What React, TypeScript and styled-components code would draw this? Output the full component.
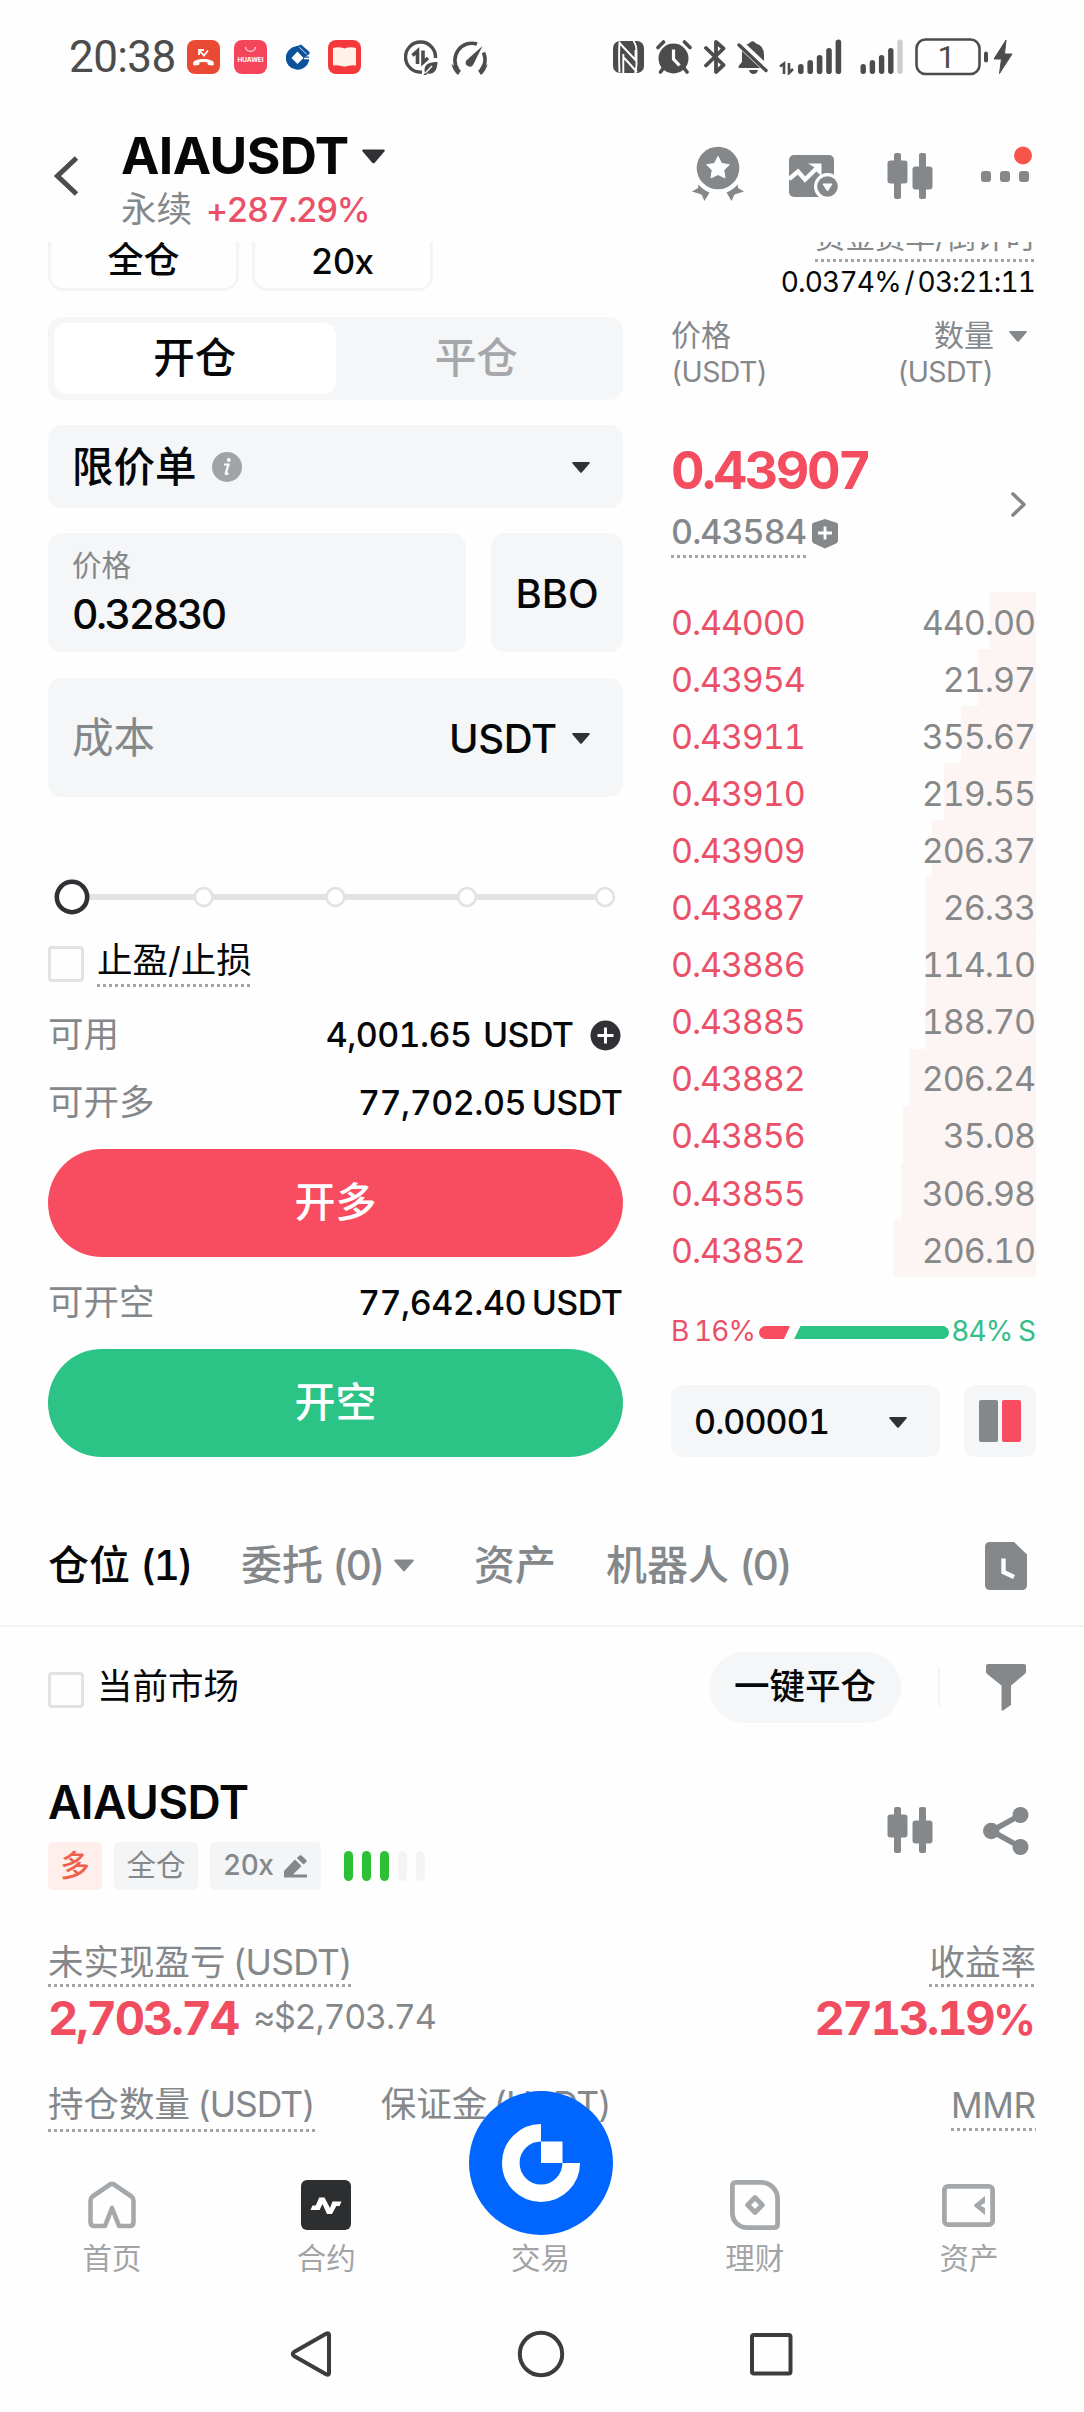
import React from "react";
import styled, { createGlobalStyle } from "styled-components";

const GRAY = "#85888b";
const RED = "#f84d60";
const GREEN = "#2cc387";
const INK = "#060708";
const PANEL = "#f4f6f7";

const Global = createGlobalStyle`
  * { box-sizing: border-box; }
  body { margin: 0; background: #fefefe; }
  svg { display: block; flex: none; }
`;

const Page = styled.div`
  width: 1084px;
  height: 2412px;
  overflow: hidden;
  display: flex;
  flex-direction: column;
  background: #fefefe;
  color: ${INK};
  font-family: Inter, "Noto Sans CJK SC", sans-serif;
  font-feature-settings: "tnum";
  white-space: nowrap;
`;

const Text = styled.span<{ $s: number; $w?: number; $c?: string; $ls?: number; $ws?: number }>`
  display: block;
  font-size: ${(p) => p.$s}px;
  font-weight: ${(p) => p.$w ?? 400};
  color: ${(p) => p.$c ?? INK};
  letter-spacing: ${(p) => p.$ls ?? 0}px;
  word-spacing: ${(p) => p.$ws ?? 0}px;
  margin-right: ${(p) => -(p.$ls ?? 0)}px;
  line-height: 1.2;
`;

/* Latin suffix set tighter than the Chinese label in front of it */
const Suffix = styled.span<{ $ls: number; $ml: number }>`
  letter-spacing: ${(p) => p.$ls}px;
  margin-left: ${(p) => p.$ml}px;
`;

const Dotted = styled.div<{ $gap?: number }>`
  width: max-content;
  padding-bottom: ${(p) => p.$gap ?? 6}px;
  background: repeating-linear-gradient(90deg, #a3a5a7 0 3px, transparent 3px 6px) left bottom / 100% 3px no-repeat;
`;

/* ---------- status bar ---------- */
const StatusBar = styled.div`
  height: 112px;
  padding: 37px 71px 0 69px;
  display: flex;
  justify-content: space-between;
`;
const StatusSide = styled.div`
  display: flex;
  align-items: center;
  height: 40px;
`;
const Slot = styled.div<{ $ml?: number; $pt?: number }>`
  margin-left: ${(p) => p.$ml ?? 0}px;
  padding-top: ${(p) => p.$pt ?? 0}px;
`;
const Clock = styled.div`
  width: 107px;
  font: 400 44px/41px Roboto, sans-serif;
  letter-spacing: -0.6px;
  color: #4c4c4c;
`;

/* ---------- header ---------- */
const Header = styled.div`
  height: 130px;
  padding: 18px 52px 0 54px;
  display: flex;
`;
const BackSlot = styled.div`
  width: 67px;
  padding-top: 26px;
`;
const TitleBlock = styled.div`
  flex: 1;
`;
const TitleLine = styled.div`
  display: flex;
  align-items: center;
  height: 52px;
  gap: 13px;
`;
const SubLine = styled.div`
  display: flex;
  align-items: center;
  height: 44px;
  gap: 14px;
  margin-top: 6px;
`;
const HeaderIcons = styled.div`
  display: flex;
  align-items: flex-start;
  padding-top: 16px;
`;

/* ---------- trading area ---------- */
const Trade = styled.div`
  height: 1258px;
  overflow: hidden;
  padding: 0 48px;
  display: flex;
  gap: 48px;
`;
const Form = styled.div`
  width: 575px;
  display: flex;
  flex-direction: column;
`;
const ModeRow = styled.div`
  display: flex;
  gap: 13px;
  margin-top: -16px;
`;
const ModeBox = styled.div<{ $w: number }>`
  width: ${(p) => p.$w}px;
  height: 65px;
  padding-top: 4px;
  border: 3px solid #f4f4f5;
  border-radius: 15px;
  display: flex;
  align-items: center;
  justify-content: center;
`;
const Segment = styled.div`
  margin-top: 26px;
  height: 83px;
  padding: 6px;
  display: flex;
  border-radius: 14px;
  background: ${PANEL};
`;
const SegmentItem = styled.div<{ $on?: boolean }>`
  flex: 1;
  display: flex;
  align-items: center;
  justify-content: center;
  border-radius: 12px;
  background: ${(p) => (p.$on ? "#fff" : "transparent")};
`;
const Field = styled.div<{ $h: number; $mt?: number; $w?: number }>`
  height: ${(p) => p.$h}px;
  ${(p) => (p.$w ? `width: ${p.$w}px;` : "")}
  margin-top: ${(p) => p.$mt ?? 25}px;
  padding: 2px 33px 0 24px;
  display: flex;
  align-items: center;
  justify-content: space-between;
  border-radius: 14px;
  background: ${PANEL};
`;
const FieldRow = styled.div`
  display: flex;
  justify-content: space-between;
`;
const Inline = styled.div<{ $gap: number }>`
  display: flex;
  align-items: center;
  gap: ${(p) => p.$gap}px;
`;
const PriceStack = styled.div`
  display: flex;
  flex-direction: column;
  gap: 6px;
`;
const BboButton = styled.div`
  width: 132px;
  height: 119px;
  margin-top: 25px;
  padding-top: 2px;
  border-radius: 14px;
  background: ${PANEL};
  display: flex;
  align-items: center;
  justify-content: center;
`;
const CheckRow = styled.div`
  height: 50px;
  margin-top: 22px;
  display: flex;
  align-items: flex-start;
  gap: 13px;
`;
const CheckBox = styled.div`
  width: 36px;
  height: 36px;
  border: 3px solid #e2e2e2;
  border-radius: 4px;
`;
const InfoRow = styled.div<{ $mt: number }>`
  height: 44px;
  margin-top: ${(p) => p.$mt}px;
  padding-top: 1px;
  display: flex;
  align-items: center;
  justify-content: space-between;
`;
const Balance = styled.div`
  display: flex;
  align-items: center;
  gap: 16px;
  margin-right: 2px;
`;
const ActionButton = styled.div<{ $bg: string }>`
  height: 108px;
  margin-top: 24px;
  border-radius: 54px;
  background: ${(p) => p.$bg};
  display: flex;
  align-items: center;
  justify-content: center;
`;

/* ---------- order book ---------- */
const Book = styled.div`
  width: 365px;
  flex: none;
  display: flex;
  flex-direction: column;
`;
const Funding = styled.div`
  height: 46px;
  margin-top: -23px;
  display: flex;
  flex-direction: column;
  align-items: flex-end;
`;
const FundingRate = styled.div`
  height: 34px;
  margin-top: 1px;
  display: flex;
  align-items: center;
  justify-content: flex-end;
`;
const BookHead = styled.div`
  margin-top: 17px;
  height: 74px;
  display: flex;
  justify-content: space-between;
`;
const HeadCell = styled.div<{ $end?: boolean }>`
  height: 72px;
  display: flex;
  flex-direction: column;
  align-items: ${(p) => (p.$end ? "flex-end" : "flex-start")};
  justify-content: space-between;
`;
const SortHead = styled.div`
  display: flex;
  gap: 15px;
  padding-right: 9px;
`;
const PriceHead = styled.div`
  margin-top: 49px;
  height: 152px;
  display: flex;
  justify-content: space-between;
`;
const PriceCell = styled.div`
  display: flex;
  flex-direction: column;
  gap: 10px;
`;
const MarkRow = styled.div`
  display: flex;
  gap: 5px;
`;
const OrderRow = styled.div<{ $depth: number }>`
  height: 57.1px;
  flex: none;
  padding-top: 5px;
  display: flex;
  align-items: center;
  justify-content: space-between;
  background: linear-gradient(#fdf5f4, #fdf5f4) right / ${(p) => p.$depth}px 100% no-repeat;
`;
const RatioRow = styled.div`
  height: 40px;
  margin-top: 35px;
  display: flex;
  align-items: center;
  justify-content: space-between;
`;
const BookTools = styled.div`
  margin-top: 33px;
  display: flex;
  justify-content: space-between;
`;
const StepSelect = styled.div`
  width: 269px;
  height: 72px;
  padding: 3px 33px 0 23px;
  border-radius: 12px;
  background: ${PANEL};
  display: flex;
  align-items: center;
  justify-content: space-between;
`;
const BookSplit = styled.div`
  width: 72px;
  height: 72px;
  border-radius: 12px;
  background: ${PANEL};
  display: flex;
  align-items: center;
  justify-content: center;
  gap: 4px;
`;
const SplitBar = styled.div<{ $bg: string }>`
  width: 19px;
  height: 42px;
  border-radius: 2px;
  background: ${(p) => p.$bg};
`;

/* ---------- positions ---------- */
const Tabs = styled.div`
  height: 127px;
  padding: 6px 57px 0 48px;
  display: flex;
  align-items: center;
  border-bottom: 2px solid #f2f3f3;
`;
const Tab = styled.div<{ $w: number }>`
  width: ${(p) => p.$w}px;
  display: flex;
  align-items: center;
  gap: 11px;
`;
const FilterRow = styled.div`
  height: 120px;
  padding: 0 58px 0 48px;
  display: flex;
  align-items: center;
`;
const Pill = styled.div`
  width: 192px;
  height: 71px;
  margin-left: auto;
  border-radius: 36px;
  background: ${PANEL};
  display: flex;
  align-items: center;
  justify-content: center;
`;
const Rule = styled.div`
  width: 2px;
  height: 38px;
  margin: 0 46px 0 37px;
  background: #f2f3f4;
`;
const PositionHead = styled.div`
  height: 163px;
  padding: 28px 55px 0 48px;
  display: flex;
  justify-content: space-between;
`;
const TagRow = styled.div`
  display: flex;
  align-items: center;
  margin-top: 12px;
`;
const Tag = styled.div<{ $w: number; $bg?: string }>`
  width: ${(p) => p.$w}px;
  height: 48px;
  margin-right: 12px;
  border-radius: 5px;
  background: ${(p) => p.$bg ?? "#f3f5f6"};
  display: flex;
  align-items: center;
  justify-content: center;
  gap: 10px;
`;
const RiskBars = styled.div`
  display: flex;
  gap: 9px;
  margin-left: 11px;
`;
const RiskBar = styled.div<{ $on: boolean }>`
  width: 9px;
  height: 30px;
  border-radius: 5px;
  background: ${(p) => (p.$on ? "#2dc036" : "#f4f4f5")};
`;
const PositionIcons = styled.div`
  display: flex;
  gap: 50px;
  padding-top: 32px;
`;
const PnlRow = styled.div`
  height: 146px;
  padding: 32px 48px 0 48px;
  display: flex;
  justify-content: space-between;
`;
const PnlCell = styled.div<{ $end?: boolean }>`
  display: flex;
  flex-direction: column;
  align-items: ${(p) => (p.$end ? "flex-end" : "flex-start")};
  gap: 3px;
`;
const Percent = styled.span`
  font-size: 42px;
`;
const SizeRow = styled.div`
  height: 74px;
  padding: 28px 48px 0 48px;
  display: flex;
  align-items: flex-start;
`;
const Margin = styled.div`
  margin-left: 66px;
  flex: 1;
`;

/* ---------- bottom navigation ---------- */
const NavBar = styled.div`
  position: relative;
  height: 165px;
  padding: 0 8px 0 5px;
  display: flex;
`;
const NavItem = styled.div`
  flex: 1;
  display: flex;
  flex-direction: column;
  align-items: center;
`;
const NavIcon = styled.div`
  height: 111px;
  padding-top: 39px;
  display: flex;
  align-items: center;
`;
const TradeButton = styled.div`
  position: absolute;
  left: 469px;
  top: -39px;
  width: 144px;
  height: 144px;
  border-radius: 50%;
  background: #0066ff;
`;
const SystemBar = styled.div`
  flex: 1;
  padding: 35px 291px 0 290px;
  display: flex;
  align-items: flex-start;
  justify-content: space-between;
`;

/* ---------- icons ---------- */
const Caret = ({ w = 18, h = 11, c = "#2f3134" }: { w?: number; h?: number; c?: string }) => (
  <svg width={w} height={h} viewBox="0 0 18 11">
    <path d="M1.2 0h15.6q1.6 0.2 0.7 1.6L10 10.3q-1 1-2 0L0.5 1.6Q-0.4 0.2 1.2 0Z" fill={c} />
  </svg>
);

const Candles = () => (
  <svg width="46" height="46" viewBox="0 0 46 46" fill={GRAY}>
    <rect x="7" y="0" width="7" height="46" rx="2" />
    <rect x="0.500" y="7.500" width="20" height="23" rx="3" />
    <rect x="32" y="0" width="7" height="46" rx="2" />
    <rect x="25.500" y="13.500" width="20" height="23" rx="3" />
  </svg>
);

const MissedCall = () => (
  <svg width="33" height="34" viewBox="0 0 33 34">
    <rect width="33" height="34" rx="8" fill="#ea4a34" />
    <path d="M12 15V10h5M12.500 10.500l4.500 5 4-5" fill="none" stroke="#fff" strokeWidth="1.800" />
    <path d="M6 23.500c0-3 5-4.500 10.500-4.500S27 20.500 27 23.500q0 2.200-1.800 2l-3.700-.5q-1-.3-1-1.300v-1.400q-4-.8-8 0v1.400q0 1-1 1.300L7.800 25.500Q6 25.700 6 23.500Z" fill="#fff" />
  </svg>
);

const HuaweiBag = () => (
  <svg width="33" height="34" viewBox="0 0 33 34">
    <rect width="33" height="34" rx="8" fill="#f5455c" />
    <path d="M11.500 7a5 4.300 0 0 0 10 0" fill="none" stroke="#ffd6dc" strokeWidth="1.300" />
    <text x="16.500" y="22.200" textAnchor="middle" textLength="26" fontSize="6.500" fontWeight="700" fill="#fff" fontFamily="Inter, sans-serif">
      HUAWEI
    </text>
  </svg>
);

const BankLogo = () => (
  <svg width="24" height="26" viewBox="0 0 24 26">
    <path fillRule="evenodd" d="M13 1.500 15 0.500 23.500 8v2L19.500 12.500H23V17A11.800 11.800 0 1 1 10 2.200ZM11.500 7.500 5.500 14l6 6 6-6Z" fill="#0a529c" />
    <path d="M13.500 3.200l7 7" stroke="#fff" strokeWidth="0.900" />
    <path d="M18 14.500h6" stroke="#fff" strokeWidth="1.600" />
  </svg>
);

const BookApp = () => (
  <svg width="33" height="34" viewBox="0 0 33 34">
    <rect width="33" height="34" rx="8" fill="#f4383c" />
    <path d="M5 8q6-1.500 11.500.5Q22 6.500 28 8v17.500q-6-.8-11.500 1.300Q11 24.700 5 25.500Z" fill="#fff1e6" />
  </svg>
);

const DataSaver = () => (
  <svg width="34" height="35" viewBox="0 0 34 35">
    <path d="M18 32A15 15 0 1 1 31.500 18" fill="none" stroke="#4c4c4c" strokeWidth="3.400" />
    <path d="M8.500 15.500l5-4.500V24M19 10.500V22.500l5-4.500" fill="none" stroke="#4c4c4c" strokeWidth="3.600" />
    <path d="M33.500 22c-8 0-13 2-13 8 0 1.500.6 3 .6 3l-1.600 2h2.500l1.500-1.500C30 34.500 33 31 33.500 22Z" fill="#4c4c4c" />
    <path d="M21.500 33l6.500-7" stroke="#fff" strokeWidth="1.300" />
  </svg>
);

const Gauge = () => (
  <svg width="39" height="35" viewBox="0 0 39 35">
    <path d="M8 30A17 17 0 0 1 27 4M33.500 12.500A17 17 0 0 1 31 30" fill="none" stroke="#4c4c4c" strokeWidth="3.600" />
    <path d="M1.500 24 11 30.500 8 35Q3 31 1.500 24ZM37.500 24 28 30.500l3 4.500Q36 31 37.500 24Z" fill="#4c4c4c" />
    <path d="M32.500 6 23.300 24.500a4 4 0 0 1-7-4Z" fill="#4c4c4c" />
  </svg>
);

const Nfc = () => (
  <svg width="31" height="32" viewBox="0 0 31 32">
    <rect width="31" height="32" rx="7" fill="#4c4c4c" />
    <path d="M6.500 0.500q-.8 14 0 31M6.500 2L22.500 19V9M10.300 13v19M10.300 16L24 31M20.500 0q3 4 3 10v13q0 5-1.500 9" fill="none" stroke="#fff" strokeWidth="1.900" />
  </svg>
);

const Alarm = () => (
  <svg width="36" height="34" viewBox="0 0 36 34">
    <circle cx="17.500" cy="18.500" r="15" fill="#4c4c4c" />
    <path d="M2 7.500 7.500 2M34 7.500 28.500 2M7.500 28 4.500 32M28 28l3 4" stroke="#4c4c4c" strokeWidth="3.600" strokeLinecap="round" />
    <path d="M17.500 9.500V19l6 6.500" fill="none" stroke="#fff" strokeWidth="3.200" />
  </svg>
);

const Bluetooth = () => (
  <svg width="22" height="36" viewBox="0 0 22 36">
    <path d="M2 9 19.500 26 12 33V3L19.500 9.500 2 26.500" fill="none" stroke="#4c4c4c" strokeWidth="3.800" strokeLinecap="round" strokeLinejoin="round" />
  </svg>
);

const Muted = () => (
  <svg width="32" height="34" viewBox="0 0 32 34">
    <path d="M12 3.500Q15.500-1 19 3.500 27 5.500 27 15v6L9.500 4.500ZM5 11l18 17H2q-1-1 0-2.500l3-3.500ZM12 30h9q-1 4-4.500 4T12 30Z" fill="#4c4c4c" />
    <path d="M2 5l27 25.500" stroke="#4c4c4c" strokeWidth="3.400" strokeLinecap="round" />
  </svg>
);

const SignalMain = () => (
  <svg width="64" height="36" viewBox="0 0 64 36">
    <path d="M1 27.500l4-3V35M10 24v10l4-4" fill="none" stroke="#4c4c4c" strokeWidth="2.600" />
    {[10, 14, 19, 26, 34.5].map((h, i) => (
      <rect key={h} x={19 + i * 9.4} y={35 - h} width="5.600" height={h} rx="2.800" fill="#4c4c4c" />
    ))}
  </svg>
);

const SignalSecond = () => (
  <svg width="44" height="36" viewBox="0 0 44 36">
    {[10, 14, 19, 26, 34.5].map((h, i) => (
      <rect key={h} x={0.5 + i * 9.2} y={35 - h} width="5.400" height={h} rx="2.700" fill={i === 4 ? "#cdcdcd" : "#4c4c4c"} />
    ))}
  </svg>
);

const Battery = () => (
  <svg width="98" height="38" viewBox="0 0 98 38">
    <rect x="1.500" y="1.500" width="63" height="34.500" rx="9" fill="none" stroke="#4c4c4c" strokeWidth="2.600" />
    <rect x="69" y="13.500" width="4" height="11" rx="2" fill="#4c4c4c" />
    <text x="31.500" y="30" textAnchor="middle" fontFamily="Roboto, sans-serif" fontSize="32" fill="#4c4c4c">
      1
    </text>
    <path d="M91 2 79 21h7.500L84.500 35.500 97 16H89.500Z" fill="#4c4c4c" stroke="#4c4c4c" strokeLinejoin="round" />
  </svg>
);

const Medal = () => (
  <svg width="52" height="55" viewBox="0 0 52 55" fill={GRAY}>
    <circle cx="26" cy="22" r="21.300" />
    <path d="M26 10.500l3.600 7 7.700 1.200-5.500 5.500 1.200 7.700L26 28.500l-7 3.400 1.200-7.700-5.500-5.500 7.700-1.200Z" fill="#fefefe" stroke="#fefefe" strokeWidth="1" strokeLinejoin="round" />
    <path d="M6.500 38.500Q11 44 17.500 46.500L12.500 55 9.500 48.500 0 45.500 6 42ZM45.500 38.500Q41 44 34.500 46.500L39.500 55 42.500 48.500 52 45.500 46 42Z" />
  </svg>
);

const ChartSwap = () => (
  <svg width="49" height="43" viewBox="0 0 49 43">
    <rect width="45" height="42" rx="5" fill={GRAY} />
    <path d="M0 24l9-7.500 7 8L29 12" fill="none" stroke="#fefefe" strokeWidth="4.400" />
    <path d="M19 8.500h13.500V21l-4.500-4-3-5Z" fill="#fefefe" />
    <circle cx="38.500" cy="31.500" r="13.500" fill="#fefefe" />
    <circle cx="38.500" cy="31.500" r="10.300" fill={GRAY} />
    <path d="M34 29h9l-4.500 7Z" fill="#fefefe" stroke="#fefefe" strokeLinejoin="round" />
  </svg>
);

const MoreDots = () => (
  <svg width="51" height="42" viewBox="0 0 51 42">
    <rect x="0" y="25" width="10" height="11" rx="3" fill={GRAY} />
    <rect x="19" y="25" width="10" height="11" rx="3" fill={GRAY} />
    <rect x="38" y="25" width="10" height="11" rx="3" fill={GRAY} />
    <circle cx="42" cy="9.500" r="9" fill="#f5554b" />
  </svg>
);

const Info = () => (
  <svg width="30" height="30" viewBox="0 0 30 30">
    <circle cx="15" cy="15" r="15" fill="#a1a4a7" />
    <path d="M12 12.500h4.500L13.800 21q-.4 1.800 2.600.3" fill="none" stroke="#fff" strokeWidth="2.200" />
    <circle cx="16.800" cy="8" r="1.900" fill="#fff" />
  </svg>
);

const SliderTrack = styled.div`
  height: 36px;
  margin-top: 82px;
  padding-left: 6px;
`;
const Slider = () => (
  <SliderTrack>
    <svg width="569" height="36" viewBox="0 0 569 36" fill="#fff">
      <path d="M18 18H551" stroke="#e2e3e3" strokeWidth="6" />
      {[149.7, 281.4, 413, 551].map((x) => (
        <circle key={x} cx={x} cy="18" r="8.900" stroke="#e2e3e3" strokeWidth="2.800" />
      ))}
      <circle cx="18" cy="18" r="15.200" stroke="#2f3134" strokeWidth="4.600" />
    </svg>
  </SliderTrack>
);

const PlusDisc = () => (
  <svg width="31" height="31" viewBox="0 0 31 31">
    <circle cx="15.500" cy="15.500" r="15" fill="#2f3134" />
    <path d="M7.500 15.500h16M15.500 7.500v16" stroke="#fff" strokeWidth="3" />
  </svg>
);

const ShieldPlus = () => (
  <svg width="26" height="30" viewBox="0 0 26 30">
    <path d="M13 0l11.500 3.700Q26 4.300 26 6v15.500q0 1.800-1.500 2.700L13 29.500 1.500 24.200Q0 23.300 0 21.500V6q0-1.700 1.500-2.300Z" fill={GRAY} />
    <path d="M6 14h14M13 7.500v13" stroke="#fff" strokeWidth="2.800" />
  </svg>
);

const RatioBar = () => (
  <svg width="190" height="13" viewBox="0 0 190 13">
    <path d="M6.500 0H31L25 13H6.500A6.500 6.500 0 0 1 6.500 0Z" fill={RED} />
    <path d="M41.500 0H183.500A6.500 6.500 0 0 1 183.500 13H35Z" fill={GREEN} />
  </svg>
);

const HistoryDoc = () => (
  <svg width="42" height="48" viewBox="0 0 42 48">
    <path d="M5 0H29L42 12.500V43q0 5-5 5H5q-5 0-5-5V5Q0 0 5 0Z" fill={GRAY} />
    <path d="M18.500 16.500V30l10.500 5" fill="none" stroke="#fefefe" strokeWidth="4.400" />
  </svg>
);

const Funnel = () => (
  <svg width="40" height="47" viewBox="0 0 40 47">
    <path d="M2 0H38q2 0 2 2V7.500q0 1.500-1.200 2.600L25 21.500V41l-8 5.500q-1.500.5-1.500-1V21.500L1.200 10.100Q0 9 0 7.500V2Q0 0 2 0Z" fill={GRAY} />
  </svg>
);

const Share = () => (
  <svg width="46" height="48" viewBox="0 0 46 48" fill={GRAY}>
    <path d="M37.500 8 8.500 24l29 16" fill="none" stroke={GRAY} strokeWidth="5.600" />
    <circle cx="37.500" cy="8" r="8" />
    <circle cx="8.200" cy="24" r="8.200" />
    <circle cx="37.500" cy="40" r="8" />
  </svg>
);

const Pencil = () => (
  <svg width="24" height="23" viewBox="0 0 24 23" fill={GRAY}>
    <path d="M0 22V16L11 4.500 17.500 11 9 19.500H23V22.500H0Z" />
    <path d="M12.800 3 15.500.4q1-.6 2 .2L22.300 5q.8 1 0 2L19.500 9.600Z" />
  </svg>
);

const Home = () => (
  <svg width="48" height="48" viewBox="0 0 48 48" fill="none" stroke="#a5a8aa" strokeWidth="4.600" strokeLinejoin="round">
    <path d="M17 45H6.500Q2.500 45 2.500 41V19.500q0-2.500 2-4L22 3.500q2-1.200 4 0L43.500 15.500q2 1.500 2 4V41q0 4-4 4H31L24 27Z" />
  </svg>
);

const Contract = () => (
  <svg width="50" height="50" viewBox="0 0 50 50">
    <rect width="50" height="50" rx="6" fill="#2d2e30" />
    <path d="M9.500 30l2-4.500h3.200L18.200 17.500h5.300L29 28l2.500-6.500H40.500L38.500 26h-3.200L31 34H26L21.500 24 18.500 30Z" fill="#fff" />
  </svg>
);

const Finance = () => (
  <svg width="50" height="50" viewBox="0 0 50 50" fill="none" stroke="#a5a8aa" strokeWidth="4.800">
    <path d="M6 2.400H31A16.500 16.500 0 0 1 47.600 19V44q0 3.600-3.600 3.600H17A14.600 14.600 0 0 1 2.400 33V6q0-3.600 3.600-3.600Z" />
    <path d="M25 17.500 32.300 25 25 32.500 17.700 25Z" strokeLinejoin="round" />
  </svg>
);

const Wallet = () => (
  <svg width="53" height="43" viewBox="0 0 53 43">
    <rect x="2.400" y="2.400" width="48.200" height="38.200" rx="3.500" fill="none" stroke="#a5a8aa" strokeWidth="4.800" />
    <path d="M43 12V19l-4.500 2.500L43 24v7L32.500 22.500q-1-1 0-2Z" fill="#a5a8aa" />
  </svg>
);

const BrandMark = () => (
  <svg width="144" height="144" viewBox="0 0 144 144">
    <path d="M72 41.800A30.200 30.200 0 1 0 102.200 72" fill="none" stroke="#fff" strokeWidth="17.600" />
    <rect x="72" y="50.500" width="21.500" height="21.500" fill="#fff" />
  </svg>
);

const orders: [string, string, number][] = [
  ["0.44000", "440.00", 46],
  ["0.43954", "21.97", 58],
  ["0.43911", "355.67", 75],
  ["0.43910", "219.55", 92],
  ["0.43909", "206.37", 104],
  ["0.43887", "26.33", 110],
  ["0.43886", "114.10", 110],
  ["0.43885", "188.70", 111],
  ["0.43882", "206.24", 126],
  ["0.43856", "35.08", 133],
  ["0.43855", "306.98", 135],
  ["0.43852", "206.10", 142],
];

export default function App() {
  return (
    <Page>
      <Global />
      <StatusBar>
        <StatusSide>
          <Clock>20:38</Clock>
          <Slot $ml={11}><MissedCall /></Slot>
          <Slot $ml={14}><HuaweiBag /></Slot>
          <Slot $ml={19}><BankLogo /></Slot>
          <Slot $ml={18}><BookApp /></Slot>
          <Slot $ml={43}><DataSaver /></Slot>
          <Slot $ml={12}><Gauge /></Slot>
        </StatusSide>
        <StatusSide>
          <Nfc />
          <Slot $ml={12}><Alarm /></Slot>
          <Slot $ml={12}><Bluetooth /></Slot>
          <Slot $ml={11}><Muted /></Slot>
          <Slot $ml={10}><SignalMain /></Slot>
          <Slot $ml={17}><SignalSecond /></Slot>
          <Slot $ml={11}><Battery /></Slot>
        </StatusSide>
      </StatusBar>

      <Header>
        <BackSlot>
          <svg width="26" height="40" viewBox="0 0 26 40">
            <path d="M22.500 2 3.500 20l19 18" fill="none" stroke="#4a4c4f" strokeWidth="5" />
          </svg>
        </BackSlot>
        <TitleBlock>
          <TitleLine>
            <Text $s={51.5} $w={700} $ls={-0.6}>AIAUSDT</Text>
            <Caret w={23} h={15} />
          </TitleLine>
          <SubLine>
            <Text $s={35.5} $c={GRAY}>永续</Text>
            <Text $s={34} $w={500} $c="#ea5068" $ls={-1.5}>+287.29%</Text>
          </SubLine>
        </TitleBlock>
        <HeaderIcons>
          <Medal />
          <Slot $ml={45} $pt={9}><ChartSwap /></Slot>
          <Slot $ml={49} $pt={7}><Candles /></Slot>
          <Slot $ml={48}><MoreDots /></Slot>
        </HeaderIcons>
      </Header>

      <Trade>
        <Form>
          <ModeRow>
            <ModeBox $w={191}><Text $s={36} $w={500}>全仓</Text></ModeBox>
            <ModeBox $w={181}><Text $s={35} $w={500} $ls={-0.8}>20x</Text></ModeBox>
          </ModeRow>
          <Segment>
            <SegmentItem $on><Text $s={41.5} $w={500}>开仓</Text></SegmentItem>
            <SegmentItem><Text $s={41.5} $w={500} $c="#a5a7aa">平仓</Text></SegmentItem>
          </Segment>
          <Field $h={83}>
            <Inline $gap={15}><Text $s={41.5} $w={500}>限价单</Text><Info /></Inline>
            <Caret />
          </Field>
          <FieldRow>
            <Field $h={119} $w={418}>
              <PriceStack>
                <Text $s={29.5} $c={GRAY}>价格</Text>
                <Text $s={41} $w={500} $ls={-2.5}>0.32830</Text>
              </PriceStack>
            </Field>
            <BboButton><Text $s={40} $w={500}>BBO</Text></BboButton>
          </FieldRow>
          <Field $h={119} $mt={26}>
            <Text $s={41.5} $c={GRAY}>成本</Text>
            <Inline $gap={15}><Text $s={40} $w={500} $ls={-0.4}>USDT</Text><Caret /></Inline>
          </Field>
          <Slider />
          <CheckRow>
            <Slot $pt={9}><CheckBox /></Slot>
            <Slot $pt={3}><Dotted $gap={4}><Text $s={35.5}>止盈/止损</Text></Dotted></Slot>
          </CheckRow>
          <InfoRow $mt={26}>
            <Text $s={35.5} $c={GRAY}>可用</Text>
            <Balance>
              <Text $s={34} $w={500} $ls={-0.6} $ws={3}>4,001.65 USDT</Text>
              <PlusDisc />
            </Balance>
          </InfoRow>
          <InfoRow $mt={24}>
            <Text $s={35.5} $c={GRAY}>可开多</Text>
            <Text $s={34} $w={500} $ls={-0.5} $ws={-3}>77,702.05 USDT</Text>
          </InfoRow>
          <ActionButton $bg={RED}><Text $s={41} $w={500} $c="#fff">开多</Text></ActionButton>
          <InfoRow $mt={24}>
            <Text $s={35.5} $c={GRAY}>可开空</Text>
            <Text $s={34} $w={500} $ls={-0.5} $ws={-3}>77,642.40 USDT</Text>
          </InfoRow>
          <ActionButton $bg={GREEN}><Text $s={41} $w={500} $c="#fff">开空</Text></ActionButton>
        </Form>

        <Book>
          <Funding>
            <Dotted $gap={7}><Text $s={30} $c={GRAY}>资金费率/倒计时</Text></Dotted>
          </Funding>
          <FundingRate>
            <Text $s={28} $ls={-0.8} $ws={-3}>0.0374% / 03:21:11</Text>
          </FundingRate>
          <BookHead>
            <HeadCell>
              <Text $s={30} $c={GRAY}>价格</Text>
              <Text $s={28.5} $c={GRAY} $ls={-0.6}>(USDT)</Text>
            </HeadCell>
            <SortHead>
              <HeadCell $end>
                <Text $s={30} $c={GRAY}>数量</Text>
                <Text $s={28.5} $c={GRAY} $ls={-0.6}>(USDT)</Text>
              </HeadCell>
              <Slot $pt={14}><Caret c={GRAY} /></Slot>
            </SortHead>
          </BookHead>
          <PriceHead>
            <PriceCell>
              <Text $s={52} $w={700} $c="#f44d60" $ls={-2.5}>0.43907</Text>
              <MarkRow>
                <Dotted $gap={5}><Text $s={34} $w={500} $c={GRAY} $ls={-0.9}>0.43584</Text></Dotted>
                <Slot $pt={7}><ShieldPlus /></Slot>
              </MarkRow>
            </PriceCell>
            <Slot $pt={52}>
              <svg width="25" height="25" viewBox="0 0 25 25">
                <path d="M2 2l11 10.500L2 23" fill="none" stroke={GRAY} strokeWidth="3.600" strokeLinecap="round" strokeLinejoin="round" />
              </svg>
            </Slot>
          </PriceHead>
          {orders.map(([price, amount, depth]) => (
            <OrderRow key={price} $depth={depth}>
              <Text $s={34} $c="#ea5068" $ls={-1.1}>{price}</Text>
              <Text $s={34} $c="#868889" $ls={-1}>{amount}</Text>
            </OrderRow>
          ))}
          <RatioRow>
            <Text $s={28} $c="#ea5068" $ls={-0.9} $ws={-1}>B 16%</Text>
            <RatioBar />
            <Text $s={28} $c="#35bd88" $ls={-0.9} $ws={-1}>84% S</Text>
          </RatioRow>
          <BookTools>
            <StepSelect>
              <Text $s={34} $w={500} $ls={-0.9}>0.00001</Text>
              <Caret />
            </StepSelect>
            <BookSplit><SplitBar $bg={GRAY} /><SplitBar $bg={RED} /></BookSplit>
          </BookTools>
        </Book>
      </Trade>

      <Tabs>
        <Tab $w={193}><Text $s={41} $w={500}>仓位<Suffix $ls={-2.6} $ml={10}>(1)</Suffix></Text></Tab>
        <Tab $w={233}>
          <Text $s={41} $w={500} $c={GRAY}>委托<Suffix $ls={-2.6} $ml={9}>(0)</Suffix></Text>
          <Caret w={20} h={13} c={GRAY} />
        </Tab>
        <Tab $w={132}><Text $s={41} $w={500} $c={GRAY}>资产</Text></Tab>
        <Tab $w={379}><Text $s={41} $w={500} $c={GRAY}>机器人<Suffix $ls={-2.4} $ml={10}>(0)</Suffix></Text></Tab>
        <HistoryDoc />
      </Tabs>
      <FilterRow>
        <Inline $gap={13}><Slot $pt={6}><CheckBox /></Slot><Text $s={35.5}>当前市场</Text></Inline>
        <Pill><Text $s={35.5} $w={500}>一键平仓</Text></Pill>
        <Rule />
        <Funnel />
      </FilterRow>
      <PositionHead>
        <div>
          <Text $s={46} $w={600} $ls={-0.6}>AIAUSDT</Text>
          <TagRow>
            <Tag $w={54} $bg="#feeeec"><Text $s={29.5} $w={500} $c="#f0604c">多</Text></Tag>
            <Tag $w={84}><Text $s={29.5} $c={GRAY}>全仓</Text></Tag>
            <Tag $w={111}><Text $s={28} $w={500} $c={GRAY} $ls={-0.5}>20x</Text><Pencil /></Tag>
            <RiskBars>
              {[1, 1, 1, 0, 0].map((on, i) => <RiskBar key={i} $on={on === 1} />)}
            </RiskBars>
          </TagRow>
        </div>
        <PositionIcons><Candles /><Share /></PositionIcons>
      </PositionHead>
      <PnlRow>
        <PnlCell>
          <Dotted $gap={2}><Text $s={35.5} $c={GRAY}>未实现盈亏<Suffix $ls={-0.8} $ml={7}>(USDT)</Suffix></Text></Dotted>
          <Inline $gap={13}>
            <Text $s={47} $w={700} $c="#f04d61" $ls={-2.2}>2,703.74</Text>
            <Text $s={34} $c={GRAY} $ls={-1.2}>≈$2,703.74</Text>
          </Inline>
        </PnlCell>
        <PnlCell $end>
          <Dotted $gap={2}><Text $s={35.5} $c={GRAY}>收益率</Text></Dotted>
          <Text $s={47} $w={700} $c="#f04d61" $ls={-2.3}>2713.19<Percent>%</Percent></Text>
        </PnlCell>
      </PnlRow>
      <SizeRow>
        <Dotted $gap={5}><Text $s={35.5} $c={GRAY}>持仓数量<Suffix $ls={-1.1} $ml={7}>(USDT)</Suffix></Text></Dotted>
        <Margin><Text $s={35.5} $c={GRAY}>保证金<Suffix $ls={-1.2} $ml={6}>(USDT)</Suffix></Text></Margin>
        <Dotted $gap={5}><Text $s={35} $c={GRAY} $ls={-0.4}>MMR</Text></Dotted>
      </SizeRow>

      <NavBar>
        <NavItem><NavIcon><Home /></NavIcon><Text $s={29.5} $c="#a2a4a6">首页</Text></NavItem>
        <NavItem><NavIcon><Contract /></NavIcon><Text $s={29.5} $c="#a2a4a6">合约</Text></NavItem>
        <NavItem><NavIcon /><Text $s={29.5} $c="#a2a4a6">交易</Text></NavItem>
        <NavItem><NavIcon><Finance /></NavIcon><Text $s={29.5} $c="#a2a4a6">理财</Text></NavItem>
        <NavItem><NavIcon><Wallet /></NavIcon><Text $s={29.5} $c="#a2a4a6">资产</Text></NavItem>
        <TradeButton><BrandMark /></TradeButton>
      </NavBar>
      <SystemBar>
        <svg width="42" height="48" viewBox="0 0 42 48">
          <path d="M36.500 3.500Q39 2.500 39 5V43q0 2.500-2.500 1.500L4 26q-2.500-2 0-4Z" fill="none" stroke="#3c3c3c" strokeWidth="4" strokeLinejoin="round" />
        </svg>
        <svg width="48" height="48" viewBox="0 0 48 48">
          <circle cx="24" cy="24" r="21.200" fill="none" stroke="#3c3c3c" strokeWidth="4" />
        </svg>
        <svg width="44" height="48" viewBox="0 0 44 48">
          <rect x="3" y="5" width="38.500" height="38.500" rx="2" fill="none" stroke="#3c3c3c" strokeWidth="4" />
        </svg>
      </SystemBar>
    </Page>
  );
}
